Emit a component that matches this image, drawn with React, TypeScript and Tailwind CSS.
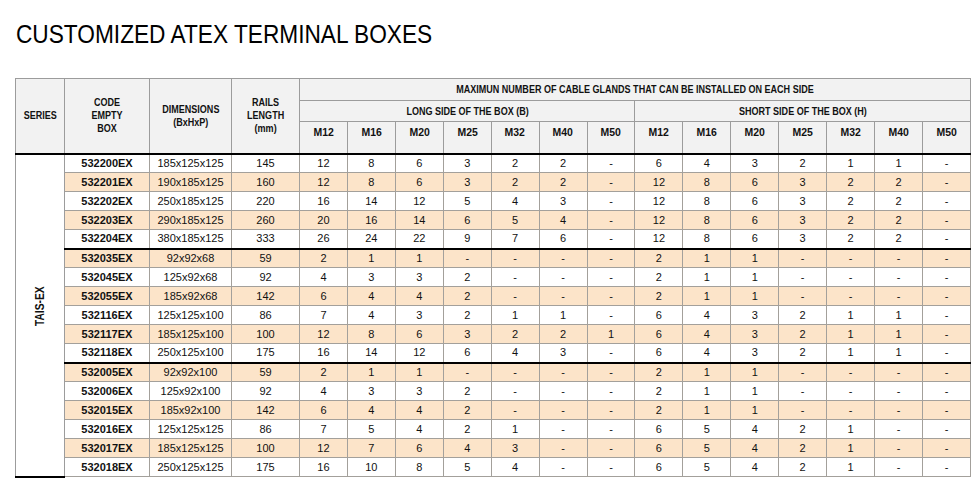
import type { ReactNode } from 'react'

const GROUP = ['M12', 'M16', 'M20', 'M25', 'M32', 'M40', 'M50']

type Row = { code: string; dim: string; rail: string; long: string[]; short: string[]; sep?: boolean }

const r = (code: string, dim: string, rail: string, l: string, s: string, sep = false): Row => ({
  code,
  dim,
  rail,
  long: l.split(' '),
  short: s.split(' '),
  sep,
})

const ROWS: Row[] = [
  r('532200EX', '185x125x125', '145', '12 8 6 3 2 2 -', '6 4 3 2 1 1 -'),
  r('532201EX', '190x185x125', '160', '12 8 6 3 2 2 -', '12 8 6 3 2 2 -'),
  r('532202EX', '250x185x125', '220', '16 14 12 5 4 3 -', '12 8 6 3 2 2 -'),
  r('532203EX', '290x185x125', '260', '20 16 14 6 5 4 -', '12 8 6 3 2 2 -'),
  r('532204EX', '380x185x125', '333', '26 24 22 9 7 6 -', '12 8 6 3 2 2 -', true),
  r('532035EX', '92x92x68', '59', '2 1 1 - - - -', '2 1 1 - - - -'),
  r('532045EX', '125x92x68', '92', '4 3 3 2 - - -', '2 1 1 - - - -'),
  r('532055EX', '185x92x68', '142', '6 4 4 2 - - -', '2 1 1 - - - -'),
  r('532116EX', '125x125x100', '86', '7 4 3 2 1 1 -', '6 4 3 2 1 1 -'),
  r('532117EX', '185x125x100', '100', '12 8 6 3 2 2 1', '6 4 3 2 1 1 -'),
  r('532118EX', '250x125x100', '175', '16 14 12 6 4 3 -', '6 4 3 2 1 1 -', true),
  r('532005EX', '92x92x100', '59', '2 1 1 - - - -', '2 1 1 - - - -'),
  r('532006EX', '125x92x100', '92', '4 3 3 2 - - -', '2 1 1 - - - -'),
  r('532015EX', '185x92x100', '142', '6 4 4 2 - - -', '2 1 1 - - - -'),
  r('532016EX', '125x125x125', '86', '7 5 4 2 1 - -', '6 5 4 2 1 - -'),
  r('532017EX', '185x125x125', '100', '12 7 6 4 3 - -', '6 5 4 2 1 - -'),
  r('532018EX', '250x125x125', '175', '16 10 8 5 4 - -', '6 5 4 2 1 - -'),
]

// header face is a condensed sans in the picture; squeeze Liberation Sans to match
function Narrow({ children }: { children: ReactNode }) {
  return <span className="inline-block scale-x-[0.82] whitespace-nowrap">{children}</span>
}

const TH = 'border border-[#9c9c9c] p-0'
const TH_LAST = 'border border-[#9c9c9c] border-b-2 border-b-black p-0'

export default function App() {
  return (
    <div className="w-[980px] h-[479px] bg-white text-[#111] font-['Liberation_Sans',Arial,sans-serif] overflow-hidden">
      <h1 className="pl-[16px] pt-[19px] text-[26px] leading-[30px] text-black">
        <span className="inline-block origin-left scale-x-[0.872] whitespace-nowrap">CUSTOMIZED ATEX TERMINAL BOXES</span>
      </h1>

      <table className="mt-[29px] ml-[15px] w-[956px] table-fixed border-collapse border border-[#9c9c9c] text-center">
        <colgroup>
          <col className="w-[49px]" />
          <col className="w-[85px]" />
          <col className="w-[82px]" />
          <col className="w-[68px]" />
          {Array.from({ length: 14 }).map((_, i) => (
            <col key={i} />
          ))}
        </colgroup>
        <thead className="bg-[#f2f2f2] font-bold text-[11px] leading-[13px]">
          <tr className="h-[22px]">
            <th rowSpan={3} className={TH_LAST}>
              <Narrow>SERIES</Narrow>
            </th>
            <th rowSpan={3} className={TH_LAST}>
              <Narrow>
                CODE<br />EMPTY<br />BOX
              </Narrow>
            </th>
            <th rowSpan={3} className={TH_LAST}>
              <Narrow>
                DIMENSIONS<br />(BxHxP)
              </Narrow>
            </th>
            <th rowSpan={3} className={TH_LAST}>
              <Narrow>
                RAILS<br />LENGTH<br />(mm)
              </Narrow>
            </th>
            <th colSpan={14} className={TH}>
              <Narrow>MAXIMUN NUMBER OF CABLE GLANDS THAT CAN BE INSTALLED ON EACH SIDE</Narrow>
            </th>
          </tr>
          <tr className="h-[21px]">
            <th colSpan={7} className={TH}>
              <Narrow>LONG SIDE OF THE BOX (B)</Narrow>
            </th>
            <th colSpan={7} className={TH}>
              <Narrow>SHORT SIDE OF THE BOX (H)</Narrow>
            </th>
          </tr>
          <tr className="h-[32px]">
            {[...GROUP, ...GROUP].map((m, i) => (
              <th key={i} className={`${TH_LAST} align-top pt-[4px]`}>
                <span className="inline-block scale-x-[0.95]">{m}</span>
              </th>
            ))}
          </tr>
        </thead>
        <tbody className="text-[11px] leading-[13px]">
          {ROWS.map((row, i) => {
            const shade = i % 2 === 1 ? 'bg-[#fce4c9]' : 'bg-white'
            const bottom = row.sep ? 'border-b-2 border-b-black' : ''
            const cell = `border border-[#a3a09b] ${bottom} p-0`
            return (
              <tr key={row.code} className={`h-[19px] ${shade}`}>
                {i === 0 && (
                  <td rowSpan={ROWS.length} className="border border-[#9c9c9c] border-b-2 border-b-black bg-white">
                    <span className="inline-block mb-[14px] font-bold text-[12px] [writing-mode:vertical-rl] rotate-180 scale-y-[0.85]">
                      TAIS-EX
                    </span>
                  </td>
                )}
                <td className={`${cell} font-bold`}>{row.code}</td>
                <td className={cell}>{row.dim}</td>
                <td className={cell}>{row.rail}</td>
                {[...row.long, ...row.short].map((v, j) => (
                  <td key={j} className={cell}>
                    {v}
                  </td>
                ))}
              </tr>
            )
          })}
        </tbody>
      </table>
    </div>
  )
}
